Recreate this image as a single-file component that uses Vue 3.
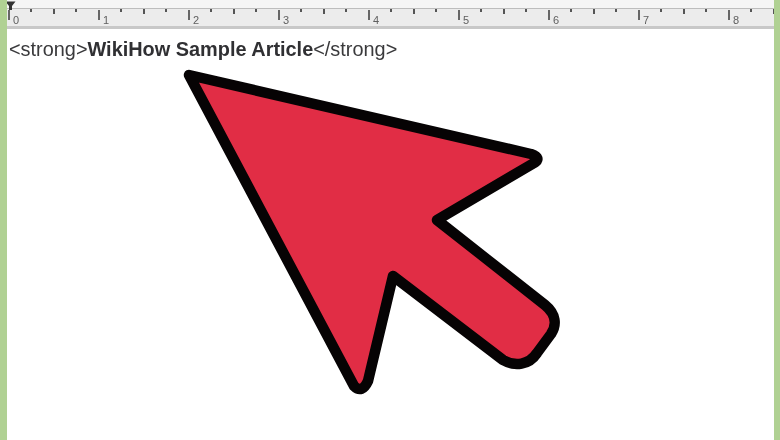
<script setup>
const inches = [0, 1, 2, 3, 4, 5, 6, 7, 8]
const minorTicks = [1, 2, 3]
</script>

<template>
  <div class="page">
    <div class="sheet">
      <div class="topbar"></div>
      <div class="ruler">
        <div v-for="n in inches" :key="n" class="inch">
          <span class="major"></span>
          <span class="label">{{ n }}</span>
          <div class="minors">
            <span v-for="m in minorTicks" :key="m" class="minor" :class="{ mid: m === 2 }"></span>
          </div>
        </div>
      </div>
      <p class="line">&lt;strong&gt;<b>WikiHow Sample Article</b>&lt;/strong&gt;</p>
    </div>
    <svg class="marker" width="11" height="9" viewBox="0 0 11 9">
      <path d="M0.5 0.5H10.5L7 5V9H4V5Z" fill="#333" />
    </svg>
    <svg class="arrow" width="780" height="440" viewBox="0 0 780 440">
      <path
        d="M189 75 L531 154 Q542 158 534 163 L437 220 L545 305 C556 314 557 325 551 334 L537 353 C529 365 515 367 503 360 L393 276 L368 381 Q362 394 354 386 Z"
        fill="#e12d45"
        stroke="#060304"
        stroke-width="10.5"
        stroke-linejoin="round"
      />
    </svg>
  </div>
</template>

<style>
html,
body {
  margin: 0;
  background: #fff;
}
</style>

<style scoped>
.page {
  position: relative;
  width: 780px;
  height: 440px;
  overflow: hidden;
  box-sizing: border-box;
  border-left: 7px solid #b0d193;
  border-right: 6px solid #b0d193;
  background: #fff;
  font-family: "Liberation Sans", Arial, sans-serif;
}

.sheet {
  display: flex;
  flex-direction: column;
  filter: blur(0.5px);
}

.topbar {
  height: 8px;
  background: #f5f5f5;
}

.ruler {
  display: flex;
  height: 17px;
  padding-left: 1px;
  overflow: hidden;
  background: #ececec;
  border-top: 1px solid #bdbdbd;
  border-bottom: 3px solid #c8c8c8;
}

.inch {
  position: relative;
  flex: 0 0 90px;
  height: 17px;
}

.major {
  position: absolute;
  left: 0;
  top: 1px;
  width: 2px;
  height: 10px;
  background: #666;
}

.label {
  position: absolute;
  left: 5px;
  top: 5px;
  font-size: 11px;
  line-height: 12px;
  color: #606060;
}

.minors {
  display: grid;
  grid-template-columns: repeat(3, 22.5px);
  padding-left: 22px;
}

.minor {
  width: 2px;
  height: 3px;
  background: #555;
}

.mid {
  height: 5px;
}

.line {
  margin: 0;
  padding: 8px 0 0 2px;
  font-size: 19.9px;
  line-height: 24px;
  color: #3a3a3c;
  white-space: nowrap;
}

.line b {
  color: #303033;
}

.marker {
  position: absolute;
  left: -2px;
  top: 1px;
}

.arrow {
  position: absolute;
  left: -7px;
  top: 0;
  filter: blur(0.5px);
}
</style>
